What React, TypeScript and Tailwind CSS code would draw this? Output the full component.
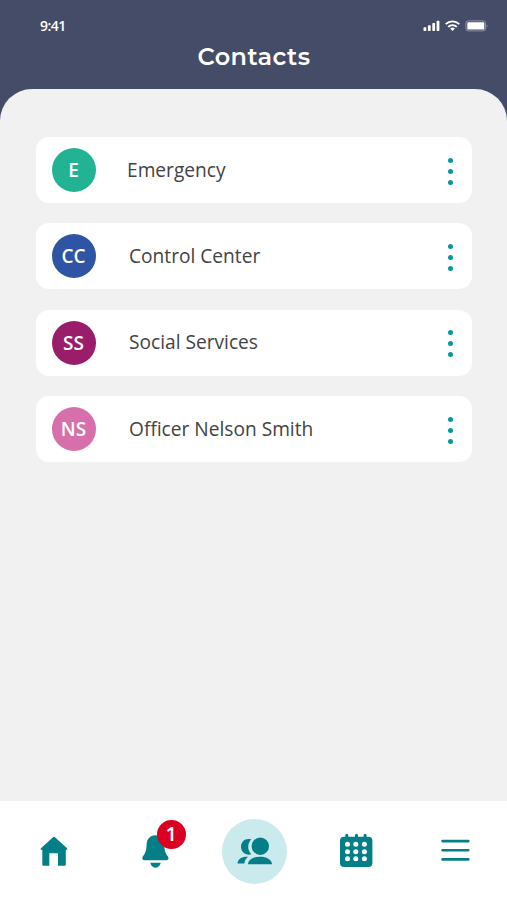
import React from 'react';

interface Contact {
  initials: string;
  name: string;
  color: string;
  indent: string;
}

const contacts: Contact[] = [
  { initials: 'E', name: 'Emergency', color: 'bg-[#22b394]', indent: 'pl-[31px]' },
  { initials: 'CC', name: 'Control Center', color: 'bg-[#2e54a3]', indent: 'pl-[33px]' },
  { initials: 'SS', name: 'Social Services', color: 'bg-[#991d6b]', indent: 'pl-[33px]' },
  { initials: 'NS', name: 'Officer Nelson Smith', color: 'bg-[#d770aa]', indent: 'pl-[33px]' },
];

const StatusIcons = () => (
  <svg className="w-[66px] h-3" viewBox="0 0 66 12" fill="#fff">
    {/* Signal */}
    <rect x="0.5" y="7.3" width="2.8" height="3.7" rx="0.7" />
    <rect x="4.9" y="5.3" width="2.8" height="5.7" rx="0.7" />
    <rect x="9.3" y="3" width="2.8" height="8" rx="0.7" />
    <rect x="13.6" y="0.8" width="2.8" height="10.2" rx="0.7" />
    {/* Wifi */}
    <g fill="none" stroke="#fff" strokeWidth="1.8">
      <path d="M22.7 4.2a9.6 9.6 0 0 1 13.6 0" />
      <path d="M25.2 6.9a6 6 0 0 1 8.6 0" />
    </g>
    <path d="M27.1 8.6a3.5 3.5 0 0 1 4.8 0L29.5 11.1z" />
    {/* Battery */}
    <rect x="42.9" y="0.9" width="19.6" height="10" rx="2.4" fill="none" stroke="#fff" strokeOpacity="0.4" />
    <rect x="44.3" y="2.2" width="17" height="7.4" rx="1.2" />
    <path d="M63.6 4.4c1.2.5 1.2 2.5 0 3z" fillOpacity="0.45" />
  </svg>
);

const HomeIcon = () => (
  <svg className="w-8 h-8" viewBox="0 0 32 32" fill="#047f88">
    <path d="M15.3 2.1q.7-.6 1.4 0l12.1 10.9q.6.6.6 1.7h-1.6v15q0 1-1 1H20V18.2h-8.7v12.5H5.3q-1 0-1-1v-15H2.6q0-1.1.6-1.7z" />
  </svg>
);

const BellIcon = () => (
  <svg className="w-8 h-8 overflow-visible" viewBox="0 0 32 32" fill="#047f88">
    <path d="M16.3.3C11 .3 7.8 4.4 7.6 9.2c-.2 5.6-.8 8.3-3.6 12.1-1.3 1.9-.8 3.9 1.2 3.9h22.4c2 0 2.5-2 1.2-3.9-2.8-3.8-3.4-6.5-3.6-12.1C25 4.4 21.8.3 16.3.3z" />
    <path d="M11.3 27.8h10.4c-.4 2.9-2.5 4.9-5.2 4.9s-4.8-2-5.2-4.9z" />
  </svg>
);

const PeopleIcon = () => (
  <svg className="w-9 h-8" viewBox="0.7 -0.5 36 32" fill="#047f88">
    <circle cx="24" cy="10.7" r="8.7" />
    <path d="M15 3.8C9 2.2 4.7 6 4.7 11.3S9.3 20.4 15 18.8C10.9 14.2 10.9 8.4 15 3.8z" />
    <path d="M11.6 28.8c.7-5 5.6-7.6 12.1-7.6s11.5 2.6 12.1 7.6z" />
    <path d="M1.2 28.1c.3-4.6 4.2-7.2 10.5-6.9-2.2 1.8-3.2 3.8-3.7 6.9z" />
  </svg>
);

const CalendarIcon = () => (
  <svg className="w-[33px] h-8 overflow-visible" viewBox="-0.8 0 33 32">
    <rect x="0.2" y="1.8" width="32.4" height="30.3" rx="4" fill="#047f88" />
    <path d="M7 .2v3M16.7 .2v3M25.3 .2v3" stroke="#047f88" strokeWidth="3" strokeLinecap="round" />
    {[9.3, 16.7, 23.7].map((y) =>
      [7.7, 16, 24.6].map((x) => <circle key={`${x}-${y}`} cx={x} cy={y} r="2.5" fill="#fff" />)
    )}
  </svg>
);

const MenuIcon = () => (
  <svg className="w-8 h-8" viewBox="0.9 0 32 32" stroke="#047f88" strokeWidth="2.6" strokeLinecap="round">
    <path d="M3.4 6.1h25.8M3.4 15.3h25.8M3.4 24.4h25.8" />
  </svg>
);

const App: React.FC = () => {
  return (
    <div className="w-[507px] h-[900px] flex flex-col overflow-hidden bg-[#454c67] font-['Open_Sans',sans-serif]">
      {/* Header */}
      <header className="h-[89px] shrink-0 text-white">
        <div className="flex items-center justify-between pt-4 pl-10 pr-[18px]">
          <span className="text-sm leading-5 font-semibold tracking-[-0.5px]">9:41</span>
          <StatusIcons />
        </div>
        <h1 className="mt-[5px] pl-px text-center text-2xl leading-8 font-semibold tracking-[0.4px] font-['Montserrat','Inter',sans-serif]">
          Contacts
        </h1>
      </header>

      {/* Contact list */}
      <main className="flex-1 rounded-t-[32px] bg-[#f1f1f1] pt-12 pl-9 pr-[35px]">
        <ul className="flex flex-col gap-[20.4px]">
          {contacts.map((contact) => (
            <li key={contact.name} className="h-[66px] flex items-center rounded-[13px] bg-white pl-4 pr-[18px]">
              <div className={`size-11 shrink-0 flex items-center justify-center rounded-full pr-px text-[19px] font-semibold text-white ${contact.color}`}>
                {contact.initials}
              </div>
              <span className={`flex-1 text-[19.15px] text-[#434343] ${contact.indent}`}>{contact.name}</span>
              <button aria-label="More" className="flex w-2 flex-col items-center gap-1.5 pt-0.5">
                <span className="size-[5px] rounded-full bg-[#08979f]" />
                <span className="size-[5px] rounded-full bg-[#08979f]" />
                <span className="size-[5px] rounded-full bg-[#08979f]" />
              </button>
            </li>
          ))}
        </ul>
      </main>

      {/* Bottom navigation */}
      <nav className="h-[99px] shrink-0 grid grid-cols-5 items-center justify-items-center bg-white pl-1 pr-px pb-px pt-[2px]">
        <HomeIcon />
        <div className="relative">
          <BellIcon />
          <span className="absolute -top-[15px] left-[18px] size-[29px] flex items-center justify-center rounded-full bg-[#db0022] pb-px text-xl leading-none font-semibold text-white">
            1
          </span>
        </div>
        <div className="size-[65px] flex items-center justify-center rounded-full bg-[#cbeaee]">
          <PeopleIcon />
        </div>
        <CalendarIcon />
        <MenuIcon />
      </nav>
    </div>
  );
};

export default App;
